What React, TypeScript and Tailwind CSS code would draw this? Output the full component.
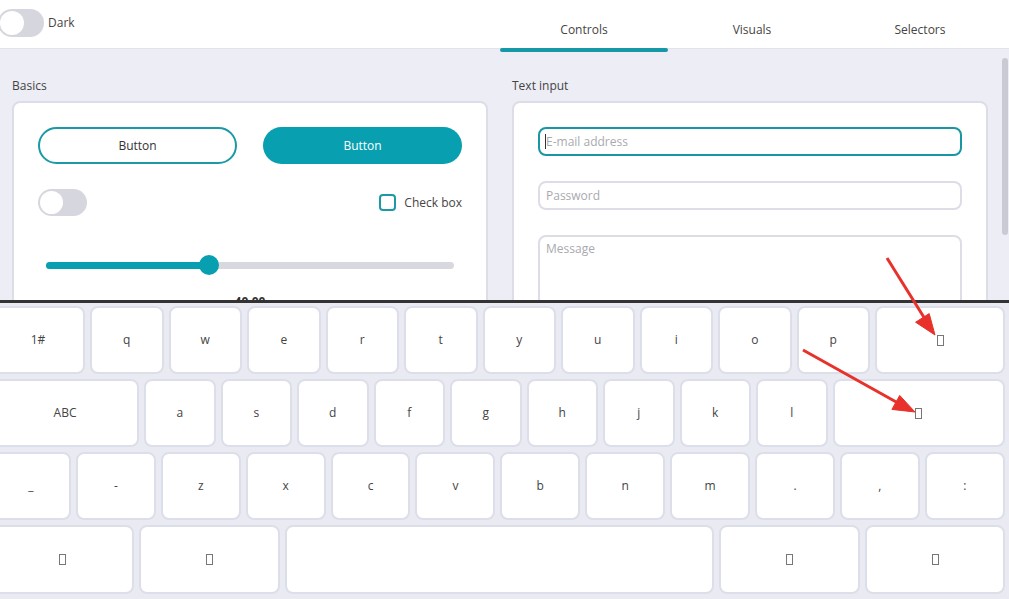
import React from 'react';

const row1 = ['q', 'w', 'e', 'r', 't', 'y', 'u', 'i', 'o', 'p'];
const row2 = ['a', 's', 'd', 'f', 'g', 'h', 'j', 'k', 'l'];
const row3 = ['_', '-', 'z', 'x', 'c', 'v', 'b', 'n', 'm', '.', ',', ':'];

// missing-glyph box the keyboard shows for icon keys
function Tofu() {
  return <span className="inline-block h-[11px] w-[7px] border border-[#777]" />;
}

function Key({ label, w }: { label?: string; w: string }) {
  return (
    <div
      className={`${w} flex shrink-0 items-center justify-center rounded-lg border-2 border-[#dcdfe9] bg-white text-xs text-[#444]`}
    >
      {label === undefined ? <Tofu /> : label}
    </div>
  );
}

function Toggle({ className = '' }: { className?: string }) {
  return (
    <div className={`flex items-center rounded-full bg-[#d6d7de] p-[2px] ${className}`}>
      <div className="aspect-square h-full rounded-full bg-white" />
    </div>
  );
}

export default function App() {
  return (
    <div className="relative h-[599px] w-full overflow-hidden bg-[#ecedf5] font-['Open_Sans',sans-serif] text-[#444]">
      {/* header */}
      <div className="flex h-[49px] border-b border-[#e2e3eb] bg-white">
        <div className="ml-[-2px] flex items-center gap-[4px] pb-[3px]">
          <Toggle className="h-[28px] w-[46px]" />
          <span className="text-xs">Dark</span>
        </div>
        <div className="ml-auto mr-[5px] grid w-[504px] grid-cols-3 text-xs">
          <div className="relative flex items-center justify-center pt-[11px]">
            Controls
            <div className="absolute bottom-[-4px] left-0 right-0 h-[4px] rounded-full bg-[#1599a7]" />
          </div>
          <div className="flex items-center justify-center pt-[11px]">Visuals</div>
          <div className="flex items-center justify-center pt-[11px]">Selectors</div>
        </div>
      </div>

      {/* content */}
      <div className="flex">
        <div className="w-[500px] px-3 pt-[29px]">
          <div className="mb-[7px] text-xs">Basics</div>
          <div className="rounded-lg border-2 border-[#dcdde6] bg-white p-6 pb-10">
            <div className="flex justify-between">
              <button className="h-[37px] w-[199px] rounded-full border-2 border-[#1b9aa6] bg-white text-xs text-[#333]">
                Button
              </button>
              <button className="h-[37px] w-[199px] rounded-full bg-[#08a0b0] text-xs text-white">
                Button
              </button>
            </div>
            <div className="mt-[25px] flex h-[27px] items-center justify-between">
              <Toggle className="h-[27px] w-[49px]" />
              <div className="flex items-center gap-[8px]">
                <div className="h-[17px] w-[17px] rounded-[4px] border-2 border-[#1b9aa6]" />
                <span className="text-xs">Check box</span>
              </div>
            </div>
            <div className="relative mx-[8px] mt-[39px] flex h-[20px] items-center">
              <div className="h-[7px] w-full rounded-full bg-[#d8d9df]" />
              <div className="absolute left-0 h-[7px] w-[40%] rounded-full bg-[#08a0b0]" />
              <div className="absolute left-[40%] h-[20px] w-[20px] -translate-x-1/2 rounded-full bg-[#08a0b0]" />
            </div>
            <div className="mt-[19px] text-center text-xs font-bold text-[#333]">40.00</div>
          </div>
        </div>

        <div className="w-[500px] px-3 pt-[29px]">
          <div className="mb-[7px] text-xs">Text input</div>
          <div className="flex flex-col gap-[25px] rounded-lg border-2 border-[#dcdde6] bg-white p-6 pb-10">
            <div className="relative">
              <input
                className="h-[29px] w-full rounded-lg border-2 border-[#1896a2] px-[6px] text-xs outline-none placeholder:text-[#a9aab0]"
                placeholder="E-mail address"
              />
              <span className="absolute left-[7px] top-[7px] h-[15px] w-px bg-[#333]" />
            </div>
            <input
              className="h-[29px] w-full rounded-lg border-2 border-[#dcdde6] px-[6px] text-xs outline-none placeholder:text-[#a9aab0]"
              placeholder="Password"
            />
            <textarea
              className="h-[90px] w-full resize-none rounded-lg border-2 border-[#dcdde6] px-[6px] py-[4px] text-xs outline-none placeholder:text-[#a9aab0]"
              placeholder="Message"
            />
          </div>
        </div>

        <div className="flex w-[9px] justify-center pt-[9px]">
          <div className="h-[177px] w-[6px] rounded-full bg-[#c9cad3]" />
        </div>
      </div>

      {/* on-screen keyboard */}
      <div className="absolute bottom-0 left-0 right-0 h-[299px] border-t-[3px] border-[#333] bg-[#e9eaf2] pt-[3px]">
        <div className="ml-[-9px] flex w-[1014px] flex-col gap-[5px]">
          <div className="flex h-[68px] gap-[5px]">
            <Key label="1#" w="w-[94px]" />
            {row1.map((k) => (
              <Key key={k} label={k} w="w-[73.5px]" />
            ))}
            <Key w="w-[130px]" />
          </div>
          <div className="flex h-[68px] gap-[5px]">
            <Key label="ABC" w="w-[148px]" />
            {row2.map((k) => (
              <Key key={k} label={k} w="w-[71.5px]" />
            ))}
            <Key w="w-[172.5px]" />
          </div>
          <div className="flex h-[68px] gap-[5px]">
            {row3.map((k) => (
              <Key key={k} label={k} w="w-[79.9px]" />
            ))}
          </div>
          <div className="flex h-[69px] gap-[5px]">
            <Key w="w-[143px]" />
            <Key w="w-[141px]" />
            <Key label="" w="w-[429px]" />
            <Key w="w-[141px]" />
            <Key w="w-[140px]" />
          </div>
        </div>
      </div>

      {/* red annotation arrows */}
      <svg className="pointer-events-none absolute left-0 top-0" width="1009" height="599">
        <g fill="#e8312b" stroke="#e8312b" strokeLinejoin="round">
          <line x1="887" y1="258" x2="925" y2="319" strokeWidth="3" />
          <polygon points="935,335 915.6,322.2 929.2,313.6" strokeWidth="1" />
          <line x1="803" y1="350" x2="898" y2="403" strokeWidth="3" />
          <polygon points="915,412 891.9,409.4 899.7,395.4" strokeWidth="1" />
        </g>
      </svg>
    </div>
  );
}
